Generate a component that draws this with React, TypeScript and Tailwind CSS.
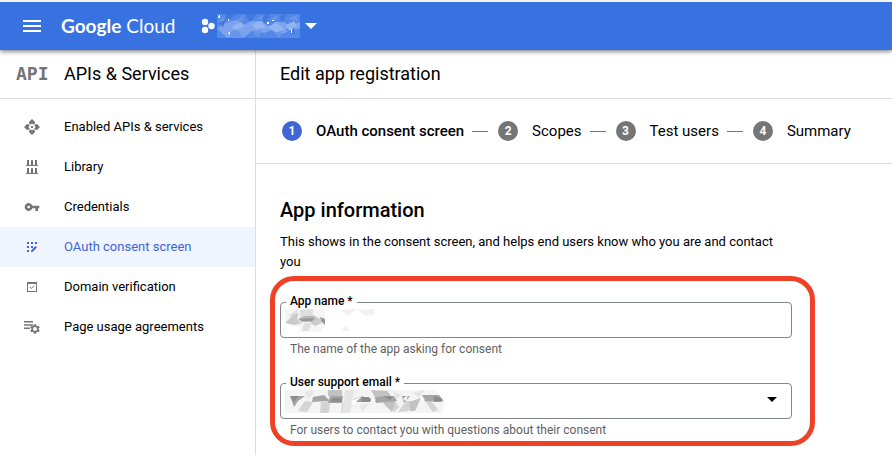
import { Fragment, type ReactNode } from "react";
import { clsx } from "clsx";
import { MdArrowDropDown, MdVpnKey } from "react-icons/md";

const EnabledApisIcon = () => (
  <svg width="16" height="16" viewBox="0 0 16 16" fill="currentColor" aria-hidden="true">
    <path d="M8 0l3 3v1.200L9.400 5.800 8 4.400 6.600 5.800 5 4.200V3z" />
    <path d="M8 16l3-3v-1.200L9.400 10.200 8 11.600 6.600 10.200 5 11.800V13z" />
    <path d="M0 8l3-3h1.200L5.800 6.600 4.400 8l1.400 1.400L4.200 11H3z" />
    <path d="M16 8l-3-3h-1.200L10.200 6.600 11.600 8l-1.400 1.400L11.800 11H13z" />
    <path d="M7 7h2v2H7z" />
  </svg>
);

const LibraryIcon = () => (
  <svg width="12" height="14" viewBox="0 0 12 14" fill="currentColor" aria-hidden="true">
    <path d="M1 0h2v5H1zM5 0h2v5H5zM9 0h2v5H9zM0 5h12v1H0zM1 8h2v5H1zM5 8h2v5H5zM9 8h2v5H9zM0 13h12v1H0z" />
  </svg>
);

const ConsentIcon = () => (
  <svg width="10" height="10" viewBox="0 0 10 10" fill="currentColor" aria-hidden="true">
    <path d="M0 0h2v2H0zM4 0h2v2H4zM8 0h2v2H8zM0 4h2v2H0zM4 4h2v2H4zM0 8h2v2H0z" />
    <path d="M4 8.500 8.500 4 10 5.400 5.500 10H4z" />
  </svg>
);

const VerificationIcon = () => (
  <svg width="10" height="10" viewBox="0 0 10 10" fill="currentColor" aria-hidden="true">
    <path fillRule="evenodd" d="M0 0h10v10H0zM1 2v7h8V2z" />
    <path d="m2.800 5 1.500 1.500L7.200 3.600" fill="none" stroke="currentColor" />
  </svg>
);

const AgreementsIcon = () => (
  <svg width="16" height="14" viewBox="0 0 16 14" fill="currentColor" aria-hidden="true">
    <path d="M0 1h9v1.400H0zM0 4.300h9v1.400H0zM0 7.600h6v1.400H0z" />
    <svg x="6" y="4" width="10" height="10" viewBox="2 2 20 20">
      <path d="M19.140 12.940c.04-.3.06-.61.06-.94 0-.32-.02-.64-.07-.94l2.030-1.580a.49.49 0 0 0 .12-.61l-1.920-3.320a.488.488 0 0 0-.59-.22l-2.390.96c-.5-.38-1.030-.7-1.620-.94l-.36-2.540a.484.484 0 0 0-.48-.41h-3.840c-.24 0-.43.17-.47.41l-.36 2.540c-.59.24-1.130.57-1.620.94l-2.390-.96c-.22-.08-.47 0-.59.22L2.740 8.870c-.12.21-.08.47.12.61l2.030 1.580c-.05.3-.09.63-.09.94s.02.64.07.94l-2.030 1.580a.49.49 0 0 0-.12.61l1.920 3.320c.12.22.37.29.59.22l2.390-.96c.5.38 1.030.7 1.620.94l.36 2.540c.05.24.24.41.48.41h3.840c.24 0 .44-.17.47-.41l.36-2.540c.59-.24 1.130-.56 1.620-.94l2.390.96c.22.08.47 0 .59-.22l1.920-3.320c.12-.22.07-.47-.12-.61l-2.010-1.580zM12 16a4 4 0 1 1 0-8 4 4 0 0 1 0 8z" />
    </svg>
  </svg>
);

const navItems: { label: string; icon: ReactNode; active?: boolean }[] = [
  { label: "Enabled APIs & services", icon: <EnabledApisIcon /> },
  { label: "Library", icon: <LibraryIcon /> },
  { label: "Credentials", icon: <MdVpnKey size={16} /> },
  { label: "OAuth consent screen", icon: <ConsentIcon />, active: true },
  { label: "Domain verification", icon: <VerificationIcon /> },
  { label: "Page usage agreements", icon: <AgreementsIcon /> },
];

const steps = ["OAuth consent screen", "Scopes", "Test users", "Summary"];

// Faceted smudges that stand in for the hidden values
const ProjectMask = () => (
  <svg width="83" height="24" viewBox="0 0 83 24" aria-hidden="true">
    <path fill="#5488e6" d="M0 0h83v24H0z" />
    <path fill="#7ba3ee" d="M0 14 10 8l11-2 5 5 8-4 10 0 9 6 6-5 8 0 6 4 12-5v7l-12 3-8 3-10-4-8 3-12-2-9 7-8-2-8 2z" />
    <path fill="#4179e1" d="M8 0h12l-6 5-7 2zM28 0h12l-7 8zM44 0h10l-6 10zM62 1l8-1-5 9zM2 9l7-4-3 8zM69 16l8-4 1 9z" />
    <path fill="#92b4f1" d="m14 13 10-5 4 4-9 4zM35 10l9-3 5 7-11 1zM51 13l8-5 8 7-8 4zM69 11l8-4 3 5-8 5z" />
    <path fill="#6696ea" d="m0 8 9-7-2 6zM20 6l8-6-2 7zM39 5l9-5-4 6zM54 5l8-5-4 7zM71 5l9-4 1 6zM12 18l9-2 5 8H15zM36 19l8-4-2 8zM57 19l8-2-2 7z" />
    <path fill="#fff" d="M2 1h1v3H1zM11 5h1v2h-1zM50 8h2v2h-2zM55 6h2v1h-2zM12 18h1v2h-2zM74 15h1v4h-1z" />
  </svg>
);

const NameMask = () => (
  <svg width="90" height="23" viewBox="0 0 90 23" aria-hidden="true">
    <path fill="#f5f5f5" d="M0 0h40v17l-5 6H13l2-5-9-1-6-6z" />
    <path fill="#dedede" d="m15 1 13-1v7l-13 1zM3 7 13 0l-2 7zM17 22l2-8 8 0-4 8z" />
    <path fill="#cbcbcb" d="m0 14 8-8 6-2-2 6 5 4-7 2zM28 6l6 3 3 5-7 3-4-3z" />
    <path fill="#b9b9b9" d="m13 10 6-3h9l3 3-4 3H17z" />
    <path fill="#989898" d="m14 10 15-1-2 3H17zM35 8l5 2v6l-4-4z" />
    <path fill="#f1f1f1" d="M57 1l8-1h6l-7 7-6-3zM73 1l16-1v5l-8 2zM56 22l5-5 4 5z" />
  </svg>
);

const EmailMask = () => (
  <svg width="160" height="23" viewBox="0 0 160 23" aria-hidden="true">
    <path fill="#f4f4f4" d="M0 0h150l5 6 4 5-1 12H0z" />
    <path fill="#d4d4d4" d="m13 21 7-10 8 1-6 10zM36 12h9l-1 11h-9zM57 13l8-2-5 12h-4zM96 11h14l4 6-5 5-6-4zM113 22l8-11 5 0-2 10zM138 9l5-2 10 13-5 2z" />
    <path fill="#c2c2c2" d="M97 9h14l-4 13-7-7zM124 12l12-4-6 13h-5zM43 0h14v6H43zM86 0l16 1 6 7-17 1z" />
    <path fill="#a5a5a5" d="M5 6h15l-7 5-4 6zM28 7l11-2 6 6-18 1zM45 6h13l-1 7H43zM69 9l8-3 11 6H67zM89 8l9-2h11l3 5-21 2zM117 6h8l-6 7zM137 5h17l4 5-2 2-16-1z" />
    <path fill="#8c8c8c" d="M5 6h9l-5 6zM48 8h8l1 4H45zM77 7h7l4 5H76zM98 6l10 1-3 3zM149 6l7 2 2 3-9 1z" />
    <path fill="#e5e5e5" d="M20 2 31 0l-8 9zM60 0h9l-4 23h-8zM108 1l9 4-6 4zM127 3l13-3-6 7zM75 15l10-2-8 9z" />
    <path fill="#fff" d="m66 11 11-5-8 8zM88 7l3 3-7 4zM118 9l5-4-2 6zM136 6l4 4-4 1z" />
  </svg>
);

const TopBar = () => (
  <header className="relative z-10 flex h-[50px] items-center border-t-2 border-[#f3f4f4] bg-[#3872e0] pl-[23px] text-white shadow-[0_1px_5px_rgba(0,0,0,0.6)]">
    <button aria-label="Main menu" className="flex w-[18px] flex-col gap-[3px]">
      <span className="h-0.5 w-full bg-white" />
      <span className="h-0.5 w-full bg-white" />
      <span className="h-0.5 w-full bg-white" />
    </button>
    <a href="#" className="ml-5 font-['Lato',sans-serif] text-[19px] leading-6">
      <span className="font-bold">Google</span> Cloud
    </a>
    <button aria-label="Select a project" className="ml-[26px] flex items-center">
      <svg width="14" height="16" viewBox="0 0 14 16" fill="currentColor" aria-hidden="true">
        <circle cx="4" cy="4" r="3.200" />
        <circle cx="4" cy="12" r="3.200" />
        <circle cx="10.500" cy="8" r="3.200" />
      </svg>
      <span className="ml-0.5"><ProjectMask /></span>
      <svg className="ml-1" width="14" height="6" viewBox="0 0 14 6" fill="currentColor" aria-hidden="true">
        <path d="M1 0h12L7 6z" />
      </svg>
    </button>
  </header>
);

const Sidebar = () => (
  <aside className="w-64 shrink-0 border-r border-[#dcdcdc]">
    <div className="flex h-[49px] items-center border-b border-[#dcdcdc]">
      <span className="w-16 pl-4 font-['DejaVu_Sans_Mono',monospace] text-lg font-bold text-[#757575]">API</span>
      <h2 className="text-lg">APIs & Services</h2>
    </div>
    <nav className="pt-2">
      {navItems.map((item) => (
        <a
          key={item.label}
          href="#"
          className={clsx("flex h-10 items-center text-[13px]", item.active && "bg-[#f0f4fe] text-[#3f66d4]")}
        >
          <span className={clsx("flex w-16 justify-center", !item.active && "text-[#757575]")}>{item.icon}</span>
          {item.label}
        </a>
      ))}
    </nav>
  </aside>
);

const Stepper = () => (
  <ol className="flex h-[65px] items-center border-b border-[#dcdcdc] pl-[26px] text-[15px]">
    {steps.map((step, i) => (
      <Fragment key={step}>
        {i > 0 && <li aria-hidden="true" className="mr-2.5 ml-2 h-px w-4 bg-[#757575]" />}
        <li className={clsx("flex items-center gap-3.5", i === 0 && "font-medium")}>
          <span
            className={clsx(
              "flex size-5 items-center justify-center rounded-full text-xs font-bold text-white",
              i === 0 ? "bg-[#3f66d4]" : "bg-[#757575]"
            )}
          >
            {i + 1}
          </span>
          {step}
        </li>
      </Fragment>
    ))}
  </ol>
);

const Field = ({ id, label, hint, children }: { id: string; label: string; hint: string; children: ReactNode }) => (
  <div>
    <div className="relative h-9">
      {children}
      <label htmlFor={id} className="absolute -top-[9px] left-1.5 bg-white px-1 text-xs leading-4 font-medium">
        {label}
      </label>
    </div>
    <p className="mt-[3px] pl-2.5 text-xs leading-4 text-[#5f5f5f]">{hint}</p>
  </div>
);

const App = () => {
  return (
    <div className="flex min-h-screen flex-col bg-white font-['Roboto',sans-serif] text-black">
      <TopBar />
      <div className="flex flex-1">
        <Sidebar />
        <main className="min-w-0 flex-1">
          <div className="flex h-[49px] items-center border-b border-[#dcdcdc] pl-6">
            <h1 className="text-lg">Edit app registration</h1>
          </div>
          <Stepper />
          <form className="max-w-[560px] px-6 pt-8">
            <h2 className="text-xl leading-7 font-medium">App information</h2>
            <p className="mt-2 text-[13px] leading-5">
              This shows in the consent screen, and helps end users know who you are and contact you
            </p>
            <div className="mt-1 -mr-[23px] -ml-2.5 flex flex-col gap-[26px] rounded-3xl border-5 border-[#ee4128] pt-[21px] pr-[18px] pb-[3px] pl-[5px]">
              <Field id="app-name" label="App name *" hint="The name of the app asking for consent">
                <input id="app-name" className="size-full rounded border border-[#80868b] px-2.5 text-[13px]" />
                <span className="pointer-events-none absolute top-[7px] left-[5px]">
                  <NameMask />
                </span>
              </Field>
              <Field
                id="support-email"
                label="User support email *"
                hint="For users to contact you with questions about their consent"
              >
                <select
                  id="support-email"
                  className="size-full appearance-none rounded border border-[#80868b] bg-white px-2.5 text-[13px]"
                />
                <span className="pointer-events-none absolute top-[7px] left-[5px]">
                  <EmailMask />
                </span>
                <MdArrowDropDown size={24} className="pointer-events-none absolute top-1 right-2" />
              </Field>
            </div>
          </form>
        </main>
      </div>
    </div>
  );
};

export default App;
